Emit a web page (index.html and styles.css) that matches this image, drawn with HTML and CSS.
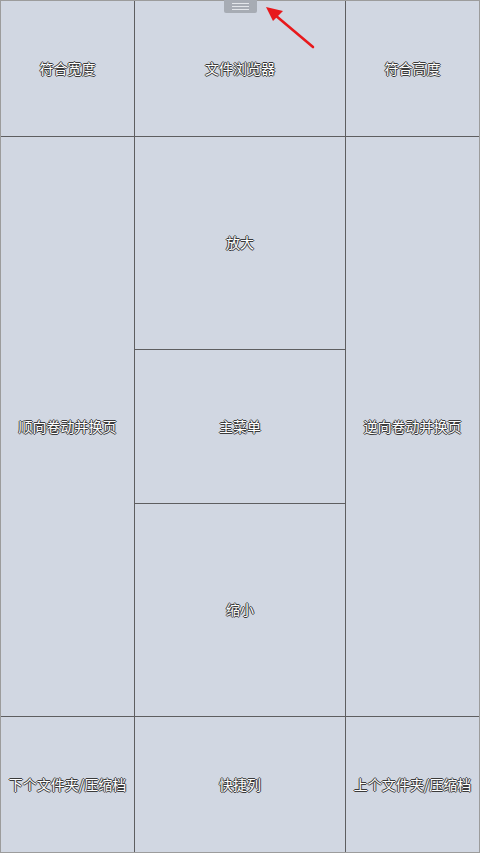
FILE: index.html
```html
<!DOCTYPE html>
<html lang="zh">
<head>
<meta charset="utf-8">
<link rel="stylesheet" href="styles.css">
</head>
<body>
<div class="screen">
  <div class="cell">符合宽度</div>
  <div class="cell">文件浏览器</div>
  <div class="cell">符合高度</div>
  <div class="cell">顺向卷动并换页</div>
  <div class="middle">
    <div class="cell">放大</div>
    <div class="cell">主菜单</div>
    <div class="cell">缩小</div>
  </div>
  <div class="cell">逆向卷动并换页</div>
  <div class="cell">下个文件夹/压缩档</div>
  <div class="cell">快捷列</div>
  <div class="cell">上个文件夹/压缩档</div>
  <div class="handle"><span></span><span></span><span></span></div>
  <svg class="arrow" width="60" height="56" viewBox="0 0 60 56">
    <line x1="50" y1="45" x2="12" y2="13" stroke="#e8191c" stroke-width="2.6" stroke-linecap="round"/>
    <polygon points="3,5 20,9 10,19" fill="#e8191c"/>
  </svg>
</div>
</body>
</html>
```
FILE: styles.css
```css
html, body {
  margin: 0;
  padding: 0;
}
body {
  width: 480px;
  height: 853px;
  overflow: hidden;
  font-family: "Noto Sans CJK SC", "Noto Sans", sans-serif;
}
.screen {
  position: relative;
  box-sizing: border-box;
  width: 480px;
  height: 853px;
  border: 1px solid #9c9c9c;
  background: #5e5e60;
  display: grid;
  grid-template-columns: 133px 210px 133px;
  grid-template-rows: 135px 579px 135px;
  gap: 1px;
}
.middle {
  display: grid;
  grid-template-rows: 212px 153px 212px;
  gap: 1px;
}
.cell {
  box-sizing: border-box;
  padding-bottom: 2px;
  background: #d1d7e2;
  display: flex;
  align-items: center;
  justify-content: center;
  font-size: 14px;
  color: #ffffff;
  -webkit-font-smoothing: antialiased;
  text-shadow: 1px 0 0 #3a3a3a, -1px 0 0 #3a3a3a, 0 1px 0 #3a3a3a, 0 -1px 0 #3a3a3a;
  white-space: nowrap;
}
.handle {
  position: absolute;
  left: 223px;
  top: -1px;
  width: 33px;
  height: 13px;
  background: #a7acb4;
  border-radius: 0 0 2px 2px;
  display: flex;
  flex-direction: column;
  align-items: center;
  justify-content: center;
  gap: 2px;
}
.handle span {
  display: block;
  width: 17px;
  height: 1px;
  background: #e3e6ea;
}
.arrow {
  position: absolute;
  left: 262px;
  top: 1px;
}
```
